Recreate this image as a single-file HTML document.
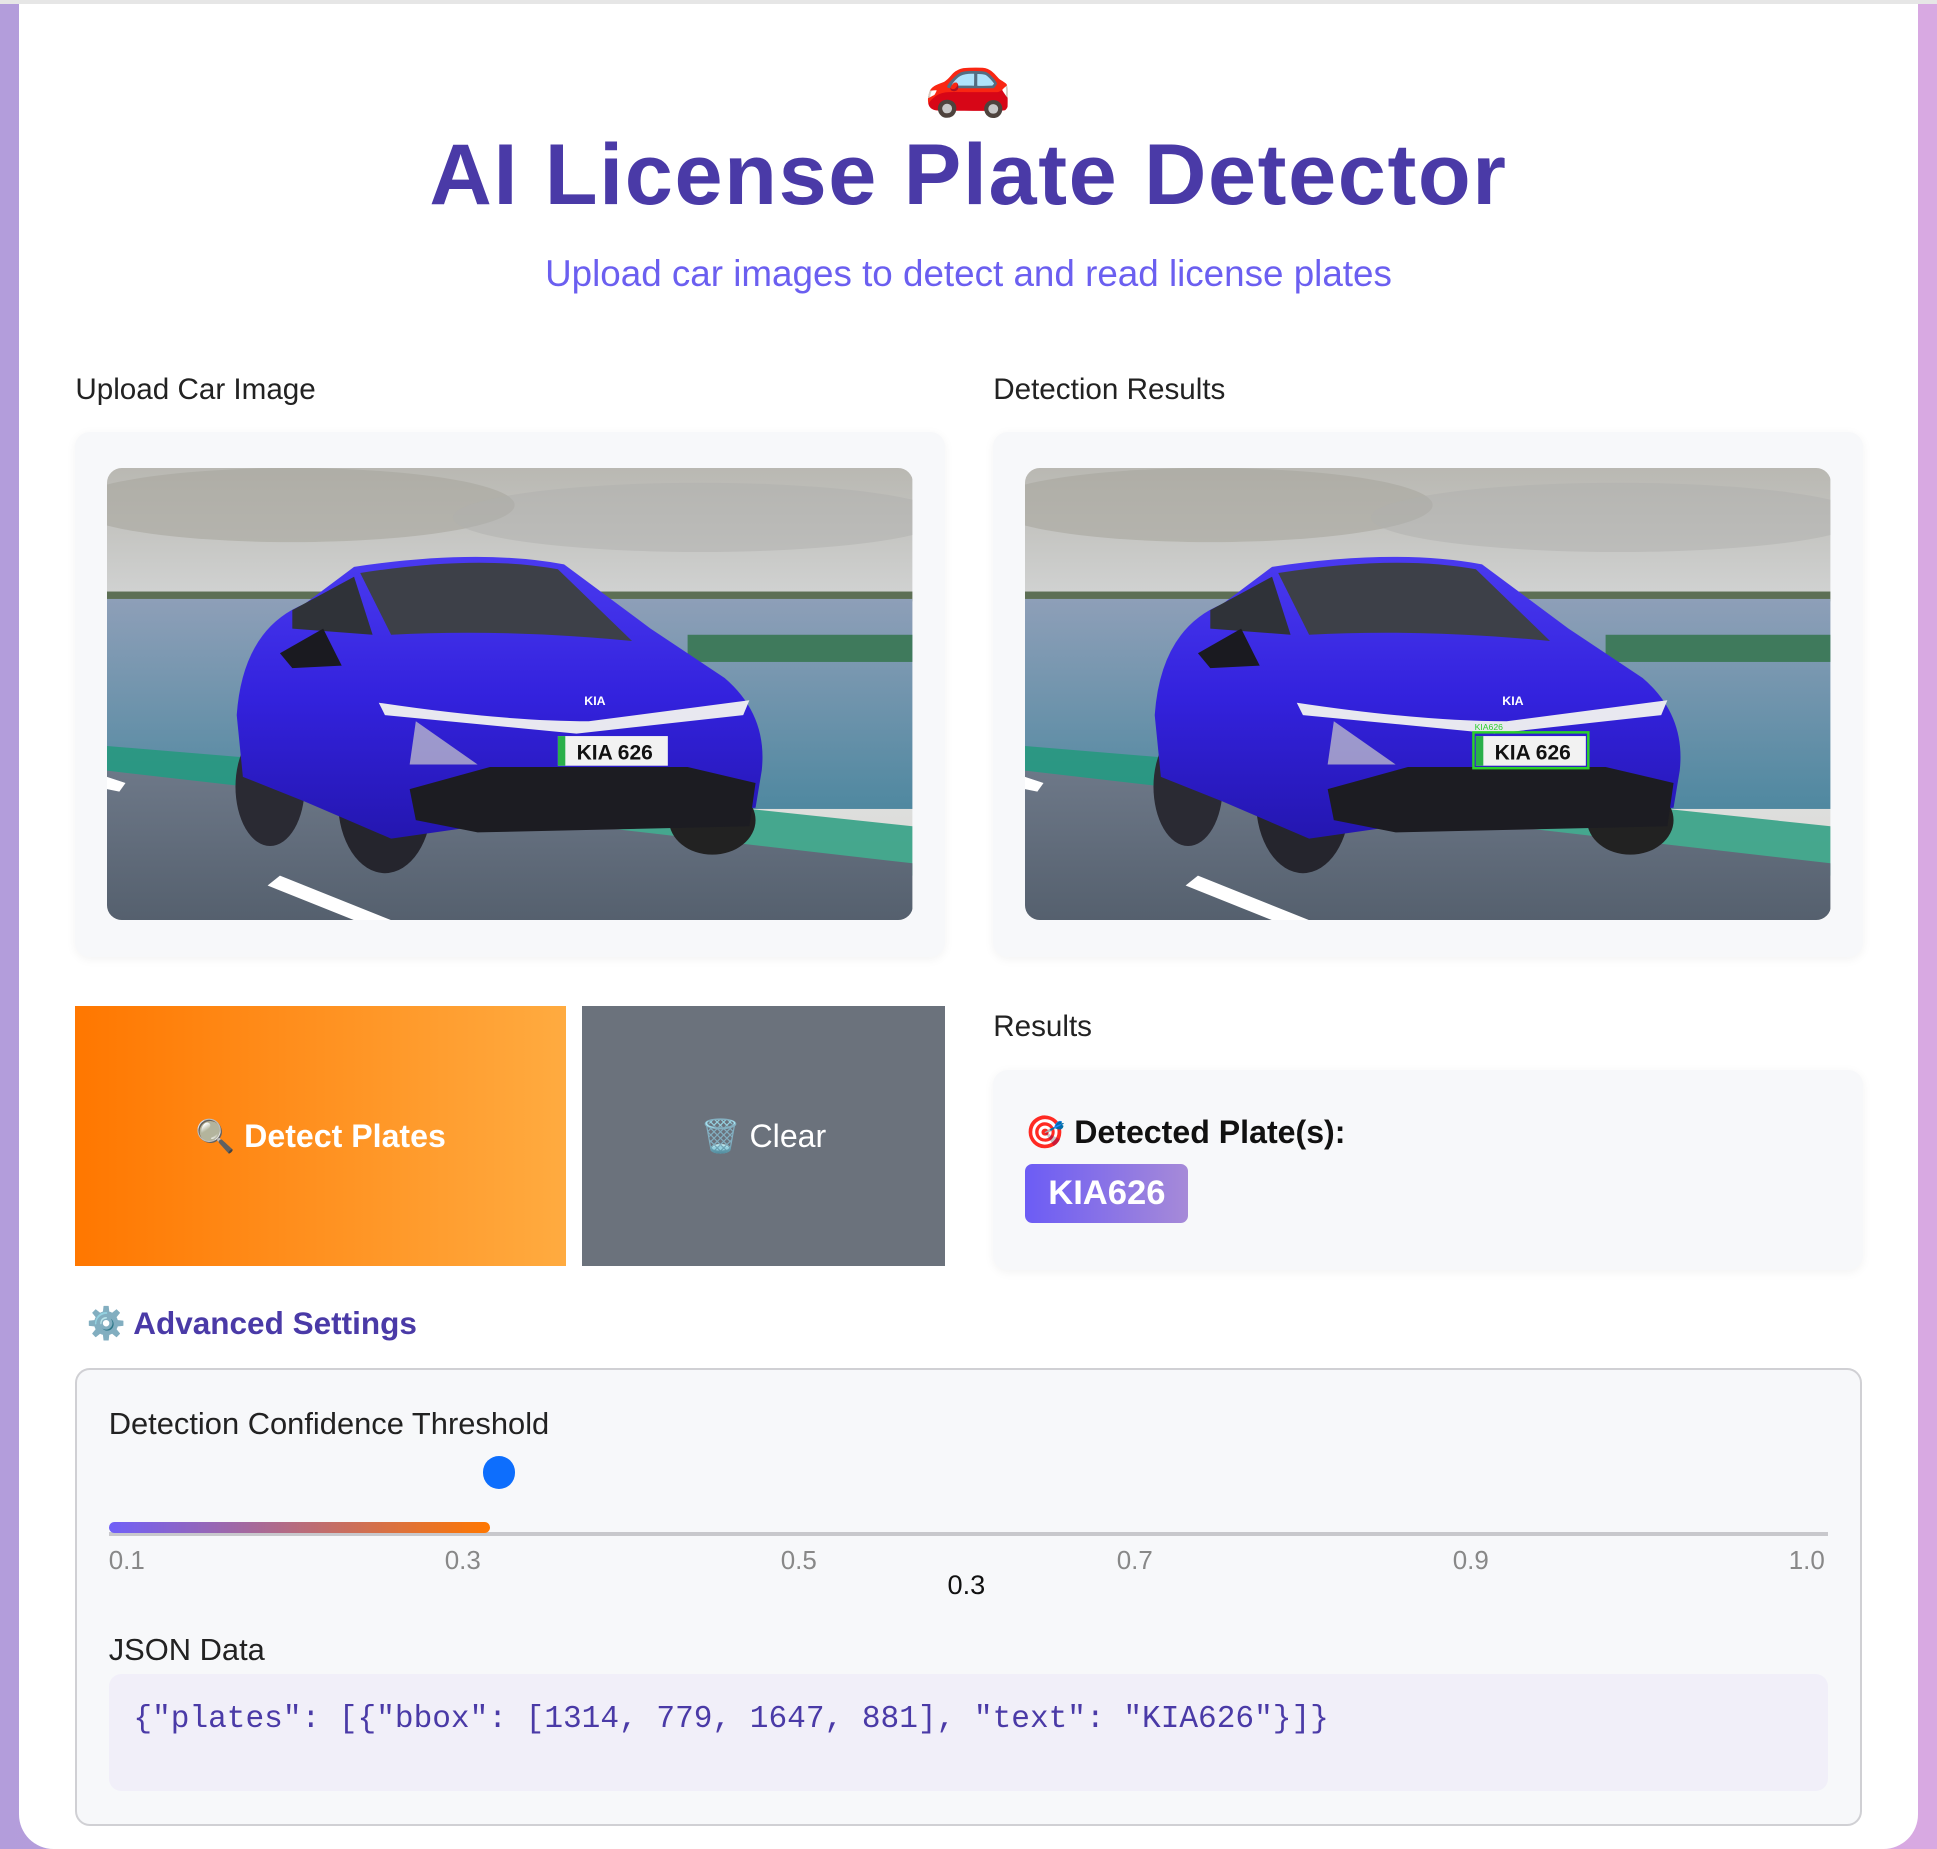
<!DOCTYPE html>
<html><head><meta charset="utf-8">
<style>
html,body{margin:0;padding:0;}
body{width:1568px;height:1497px;zoom:1.23533;overflow:hidden;background:linear-gradient(90deg,#b39ddb,#d8a9e2);font-family:"Liberation Sans","DejaVu Sans",sans-serif;position:relative;}
.topline{position:absolute;left:0;top:0;width:1568px;height:3px;background:#e6e6e6;}
.card{position:absolute;left:15px;top:3px;width:1538px;height:1494px;background:#fff;border-radius:0 0 28px 28px;}
.abs{position:absolute;}
.title{left:0;width:1568px;top:102px;text-align:center;font-size:70px;font-weight:bold;color:#4a3aa7;letter-spacing:1.3px;}
.sub{left:0;width:1568px;top:205px;text-align:center;font-size:29.8px;color:#6b5ff0;}
.lbl{font-size:24px;color:#222;}
.panel{background:#f7f8fa;border-radius:12px;box-shadow:0 2px 8px rgba(0,0,0,0.05);}
.img{border-radius:12px;overflow:hidden;}
.btn{display:flex;align-items:center;justify-content:center;color:#fff;font-size:26px;}
</style></head><body>
<div class="topline"></div>
<div class="card"></div>
<div class="abs" style="left:0;width:1568px;top:32px;text-align:center;font-size:58px;line-height:64px;">🚗</div>
<div class="abs title">AI License Plate Detector</div>
<div class="abs sub">Upload car images to detect and read license plates</div>
<div class="abs lbl" style="left:61px;top:302px;">Upload Car Image</div>
<div class="abs lbl" style="left:804px;top:302px;">Detection Results</div>

<svg width="0" height="0" style="position:absolute">
<defs>
<linearGradient id="sky" x1="0" y1="0" x2="0" y2="1"><stop offset="0" stop-color="#b9b8b2"/><stop offset="0.5" stop-color="#e3e6ea"/><stop offset="1" stop-color="#d8d6cf"/></linearGradient>
<linearGradient id="field" x1="0" y1="0" x2="0" y2="1"><stop offset="0" stop-color="#8e9fb8"/><stop offset="1" stop-color="#4f88a0"/></linearGradient>
<linearGradient id="road" x1="0" y1="0" x2="0" y2="1"><stop offset="0" stop-color="#6d7888"/><stop offset="1" stop-color="#55606e"/></linearGradient>
<linearGradient id="body" x1="0" y1="0" x2="0" y2="1"><stop offset="0" stop-color="#4a3af0"/><stop offset="0.5" stop-color="#3322dd"/><stop offset="1" stop-color="#2416b0"/></linearGradient>
<symbol id="carimg" viewBox="0 0 652 366">
<rect width="652" height="366" fill="url(#sky)"/>
<ellipse cx="150" cy="30" rx="180" ry="30" fill="#a9a69f" opacity="0.6"/>
<ellipse cx="480" cy="40" rx="200" ry="28" fill="#b0b0ad" opacity="0.5"/>
<rect y="100" width="652" height="8" fill="#5d6f55"/>
<rect y="106" width="652" height="170" fill="url(#field)"/>
<rect x="470" y="135" width="182" height="22" fill="#3f7a5c"/>
<path d="M0 225 L180 240 L652 290 L652 330 L0 270Z" fill="#1f9a7a" opacity="0.8"/>
<path d="M0 245 L652 320 L652 366 L0 366Z" fill="url(#road)"/>
<path d="M140 330 L230 366 L200 366 L130 338Z" fill="#fff"/>
<path d="M0 250 L15 255 L10 262 L0 260Z" fill="#fff"/>
<ellipse cx="132" cy="258" rx="28" ry="48" fill="#2a2a33"/>
<ellipse cx="225" cy="270" rx="38" ry="58" fill="#25252d"/>
<ellipse cx="490" cy="285" rx="35" ry="28" fill="#222"/>
<path d="M105 200 Q110 130 160 110 L200 80 Q300 65 370 78 L440 130 L500 170 Q535 200 530 245 L525 275 L300 290 L230 300 L160 270 L110 250Z" fill="url(#body)"/>
<path d="M205 85 Q300 70 365 82 L425 140 Q320 130 230 135Z" fill="#3d4048"/>
<path d="M150 115 L200 88 L215 135 L150 130Z" fill="#2f3238"/>
<path d="M140 150 L175 130 L190 160 L150 162Z" fill="#1a1a20"/>
<path d="M220 190 Q320 205 390 205 L520 188 L515 200 L380 215 L225 200Z" fill="#e8e8f0"/>
<path d="M250 205 L300 240 L245 240Z" fill="#ccc" opacity="0.7"/>
<path d="M245 260 L310 242 L470 242 L525 255 L520 290 L300 295 L250 285Z" fill="#1c1c22"/>
<rect x="365" y="217" width="89" height="24" fill="#f2f2f2"/>
<rect x="365" y="217" width="6" height="24" fill="#2ab04a"/>
<text x="411" y="236" font-family="Liberation Sans,sans-serif" font-size="17" font-weight="bold" text-anchor="middle" fill="#111">KIA 626</text>
<text x="395" y="192" font-family="Liberation Sans,sans-serif" font-size="10" font-weight="bold" text-anchor="middle" fill="#fff">KIA</text>
</symbol>
</defs></svg>

<div class="abs panel" style="left:61px;top:350px;width:704px;height:425px;"></div>
<svg class="abs img" style="left:87px;top:379px;" width="652" height="366"><use href="#carimg" width="652" height="366"/></svg>
<div class="abs panel" style="left:804px;top:350px;width:704px;height:425px;"></div>
<svg class="abs img" style="left:830px;top:379px;" width="652" height="366"><use href="#carimg" width="652" height="366"/>
<rect x="363" y="214" width="93" height="29" fill="none" stroke="#2bd02b" stroke-width="2"/>
<text x="364" y="212" font-family="Liberation Sans,sans-serif" font-size="7" fill="#2bd02b">KIA626</text></svg>

<div class="abs btn" style="left:61px;top:814px;width:397px;height:211px;background:linear-gradient(90deg,#ff7700,#ffab40);font-weight:bold;">🔍 Detect Plates</div>
<div class="abs btn" style="left:471px;top:814px;width:294px;height:211px;background:#6b727c;">🗑️ Clear</div>

<div class="abs lbl" style="left:804px;top:818px;">Results</div>
<div class="abs panel" style="left:804px;top:866px;width:704px;height:162px;"></div>
<div class="abs" style="left:830px;top:901px;font-size:26px;font-weight:bold;color:#111;">🎯 Detected Plate(s):</div>
<div class="abs" style="left:830px;top:942px;width:132px;height:48px;border-radius:6px;background:linear-gradient(90deg,#6c5cf5,#a68ad8);color:#fff;font-size:28px;font-weight:bold;display:flex;align-items:center;justify-content:center;">KIA626</div>

<div class="abs" style="left:70px;top:1056px;font-size:25.5px;font-weight:bold;color:#4a3aa7;">⚙️ Advanced Settings</div>
<div class="abs" style="left:61px;top:1107px;width:1443px;height:368px;border:2px solid #d0d0d4;border-radius:12px;background:#f7f8fa;"></div>
<div class="abs" style="left:88px;top:1138px;font-size:25px;color:#222;">Detection Confidence Threshold</div>
<div class="abs" style="left:391px;top:1179px;width:26px;height:26px;border-radius:50%;background:#0d6efd;"></div>
<div class="abs" style="left:88px;top:1240px;width:1392px;height:3px;background:#c8c8cc;"></div>
<div class="abs" style="left:88px;top:1232px;width:309px;height:9px;border-radius:5px;background:linear-gradient(90deg,#7060f8,#ff7700);"></div>
<div class="abs" style="left:88px;top:1252px;font-size:21px;color:#888;">0.1</div>
<div class="abs" style="left:360px;top:1252px;font-size:21px;color:#888;">0.3</div>
<div class="abs" style="left:632px;top:1252px;font-size:21px;color:#888;">0.5</div>
<div class="abs" style="left:904px;top:1252px;font-size:21px;color:#888;">0.7</div>
<div class="abs" style="left:1176px;top:1252px;font-size:21px;color:#888;">0.9</div>
<div class="abs" style="left:1448px;top:1252px;font-size:21px;color:#888;">1.0</div>
<div class="abs" style="left:767px;top:1270px;font-size:22px;color:#111;">0.3</div>
<div class="abs" style="left:88px;top:1321px;font-size:25px;color:#222;">JSON Data</div>
<div class="abs" style="left:88px;top:1355px;width:1392px;height:95px;border-radius:10px;background:#f1eff9;"></div>
<div class="abs" style="left:108px;top:1378px;font-family:'Liberation Mono','DejaVu Sans Mono',monospace;font-size:25.2px;color:#4a3aa7;">{"plates": [{"bbox": [1314, 779, 1647, 881], "text": "KIA626"}]}</div>
</body></html>
